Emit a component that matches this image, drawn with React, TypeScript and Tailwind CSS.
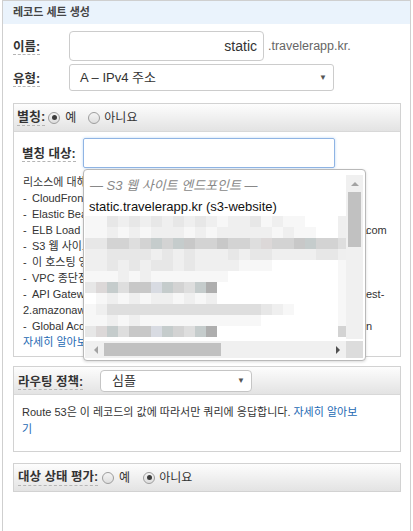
import React from 'react';

const FONT = "font-['Liberation_Sans','Noto_Sans_CJK_KR',sans-serif]";

// blurred rows of the suggestion list, one char per 11px cell
const shade: Record<string, string> = {
  '0': 'bg-white',
  '1': 'bg-[#f7f7f7]',
  '2': 'bg-[#efefef]',
  '3': 'bg-[#e7e7e7]',
  '4': 'bg-[#dedede]',
  '5': 'bg-[#d3d3d3]',
  '6': 'bg-[#c8c8c8]',
  '7': 'bg-[#bcbcbc]',
  '8': 'bg-[#aeaeae]',
  a: 'bg-[#c5cccc]',
  b: 'bg-[#d8dbe2]',
  c: 'bg-[#dcd8d8]',
};

const blurRows = [
  '113232323232122312110002',
  '112121222121222221211002',
  '335545a5a6556554c556a554',
  '223333232322232332222332',
  '223232332322221110000001',
  '111212111111100000000001',
  '3ca466ba54a8000000000001',
  '012121221212000000000001',
  '124444444444444432100001',
  '112121111111111100000001',
  '3ca466ba54a8000000000005',
];

const aliasLines = [
  { bullet: false, text: '리소스에 대해 다음 값 중 하나를 입력합니다.', tail: '' },
  { bullet: true, text: 'CloudFront 배포: 도메인 이름', tail: '' },
  { bullet: true, text: 'Elastic Beanstalk 환경: CNAME 속성', tail: '' },
  { bullet: true, text: 'ELB Load Balancer: DNS 이름 (예: my-elb.us-west-2.elb.amazonaws.', tail: 'com' },
  { bullet: true, text: 'S3 웹 사이트 엔드포인트: 버킷 이름', tail: '' },
  { bullet: true, text: '이 호스팅 영역의 레코드 세트: 레코드 이름', tail: '' },
  { bullet: true, text: 'VPC 종단점: DNS 이름', tail: '' },
  { bullet: true, text: 'API Gateway 리전 API: d-abcde12345.execute-api.us-w', tail: 'est-' },
  { bullet: false, text: '2.amazonaws.com', tail: '' },
  { bullet: true, text: 'Global Accelerator: DNS 이름 (예: a1234.awsglobalaccelerator.co', tail: 'n' },
];

const Radio = ({ checked }: { checked?: boolean }) => (
  <span className="w-[12px] h-[12px] shrink-0 rounded-full border border-[#9d9d9d] bg-linear-to-b from-[#f4f4f4] to-[#dedede] flex items-center justify-center">
    {checked && <span className="w-[5px] h-[5px] rounded-full bg-[#3c3c3c]" />}
  </span>
);

const Label = ({ children, size }: { children: React.ReactNode; size: string }) => (
  <span className={`font-bold text-[#333] border-b border-dashed border-[#b5b5b5] leading-[16px] whitespace-nowrap ${size}`}>
    {children}
  </span>
);

const Arrow = () => <span className="text-[8px] text-[#555] leading-none">▼</span>;

const Suggestions = () => (
  <div className="absolute left-[69px] top-[37px] w-[283px] border border-[#b9b9b9] rounded-[4px] bg-white shadow-[0_1px_3px_rgba(0,0,0,0.15)] pt-[5px] pb-[2px] pl-[1px] pr-[2px] z-10">
    <div className="flex h-[164px]">
      <div className="flex-1 overflow-hidden">
        <div className="h-[22px] pl-[5px] flex items-center italic text-[13px] text-[#888] whitespace-nowrap">
          — S3 웹 사이트 엔드포인트 —
        </div>
        <div className="h-[19px] pl-[4px] flex items-center text-[13px] text-[#111] whitespace-nowrap">
          static.travelerapp.kr (s3-website)
        </div>
        {blurRows.map((row, i) => (
          <div key={i} className="flex h-[11px]">
            {row.split('').map((c, j) => (
              <span key={j} className={`w-[11px] h-[11px] shrink-0 ${shade[c]}`} />
            ))}
          </div>
        ))}
      </div>
      <div className="w-[17px] bg-[#f0f0f0] flex flex-col items-center">
        <div className="h-[17px] flex items-center justify-center">
          <span className="w-0 h-0 border-x-[4px] border-x-transparent border-b-[4px] border-b-[#a3a3a3]" />
        </div>
        <div className="w-[13px] h-[55px] bg-[#c1c1c1]" />
      </div>
    </div>
    <div className="flex h-[17px] mt-[2px]">
      <div className="flex-1 bg-[#f0f0f0] flex items-center pl-[2px]">
        <div className="w-[17px] flex items-center justify-center">
          <span className="w-0 h-0 border-y-[4px] border-y-transparent border-r-[4px] border-r-[#a3a3a3]" />
        </div>
        <div className="w-[117px] h-[13px] bg-[#c1c1c1]" />
        <div className="flex-1" />
        <div className="w-[17px] flex items-center justify-center">
          <span className="w-0 h-0 border-y-[4px] border-y-transparent border-l-[4px] border-l-[#505050]" />
        </div>
      </div>
      <div className="w-[17px] bg-[#dcdcdc]" />
    </div>
  </div>
);

const App = () => {
  return (
    <div className={`w-[413px] h-[531px] bg-white text-[#333] ${FONT}`}>
      <div className="ml-[2px] w-[409px] h-full border-x border-t border-[#cfcfcf]">
        <div className="h-[23px] bg-[#eaf3fc] pl-[10px] flex items-center text-[11px] font-bold text-[#444]">
          레코드 세트 생성
        </div>

        <div className="pl-[10px] pt-[7px]">
          <div className="flex items-center h-[30px]">
            <div className="w-[56px]">
              <Label size="text-[12.5px]">이름:</Label>
            </div>
            <div className="w-[195px] h-[30px] border border-[#ccc] rounded-[4px] flex items-center justify-end pr-[6px] text-[14px] text-[#333]">
              static
            </div>
            <span className="ml-[4px] text-[12.5px] text-[#666]">.travelerapp.kr.</span>
          </div>
          <div className="flex items-center h-[27px] mt-[3px]">
            <div className="w-[56px]">
              <Label size="text-[12.5px]">유형:</Label>
            </div>
            <div className="w-[265px] h-[27px] border border-[#ccc] rounded-[3px] flex items-center justify-between pl-[10px] pr-[6px] text-[13px] text-[#333]">
              <span>A – IPv4 주소</span>
              <Arrow />
            </div>
          </div>
        </div>

        <div className="mt-[12px] ml-[10px] w-[388px] border border-[#d2d2d2]">
          <div className="h-[28px] flex items-center pl-[3px] bg-linear-to-b from-[#fdfdfd] to-[#e3e3e3] border-b border-[#d8d8d8]">
            <Label size="text-[13px]">별칭:</Label>
            <span className="ml-[3px]"><Radio checked /></span>
            <span className="ml-[5px] text-[12px]">예</span>
            <span className="ml-[12px]"><Radio /></span>
            <span className="ml-[4px] text-[12px]">아니요</span>
          </div>
          <div className="relative pt-[6px] pl-[8px] pb-[6px]">
            <div className="flex items-center">
              <div className="w-[61px]">
                <Label size="text-[12.5px]">별칭 대상:</Label>
              </div>
              <div className="w-[252px] h-[30px] border border-[#8fb4e4] rounded-[2px] shadow-[0_0_3px_#bcd6f4]" />
            </div>
            <div className="mt-[6px] pl-[1px] text-[11px] leading-[16px] text-[#333]">
              {aliasLines.map((l, i) => (
                <div key={i} className="flex whitespace-nowrap">
                  {l.bullet && <span className="w-[9px] shrink-0">-</span>}
                  <span className={`shrink-0 ${l.bullet ? 'w-[334px]' : 'w-[343px]'}`}>{l.text}</span>
                  <span>{l.tail}</span>
                </div>
              ))}
              <div className="text-[#2469b3]">자세히 알아보기</div>
            </div>
            <Suggestions />
          </div>
        </div>

        <div className="mt-[9px] ml-[10px] w-[388px] border border-[#d2d2d2]">
          <div className="h-[28px] flex items-center pl-[4px] bg-linear-to-b from-[#fdfdfd] to-[#e3e3e3] border-b border-[#d8d8d8]">
            <div className="w-[82px]">
              <Label size="text-[12.5px]">라우팅 정책:</Label>
            </div>
            <div className="w-[152px] h-[22px] bg-white border border-[#c5c5c5] rounded-[4px] flex items-center justify-between pl-[11px] pr-[6px] text-[13px]">
              <span>심플</span>
              <Arrow />
            </div>
          </div>
          <div className="pt-[9px] pb-[13px] pl-[8px] text-[11px] leading-[17px] text-[#333]">
            Route 53은 이 레코드의 값에 따라서만 쿼리에 응답합니다.{' '}
            <span className="text-[#2469b3]">
              자세히 알아보
              <br />기
            </span>
          </div>
        </div>

        <div className="mt-[11px] ml-[10px] w-[388px] border border-[#d2d2d2]">
          <div className="h-[27px] flex items-center pl-[4px] bg-linear-to-b from-[#fdfdfd] to-[#e3e3e3]">
            <Label size="text-[12.5px]">대상 상태 평가:</Label>
            <span className="ml-[4px]"><Radio /></span>
            <span className="ml-[5px] text-[12px]">예</span>
            <span className="ml-[13px]"><Radio checked /></span>
            <span className="ml-[4px] text-[12px]">아니요</span>
          </div>
        </div>
      </div>
    </div>
  );
};

export default App;
